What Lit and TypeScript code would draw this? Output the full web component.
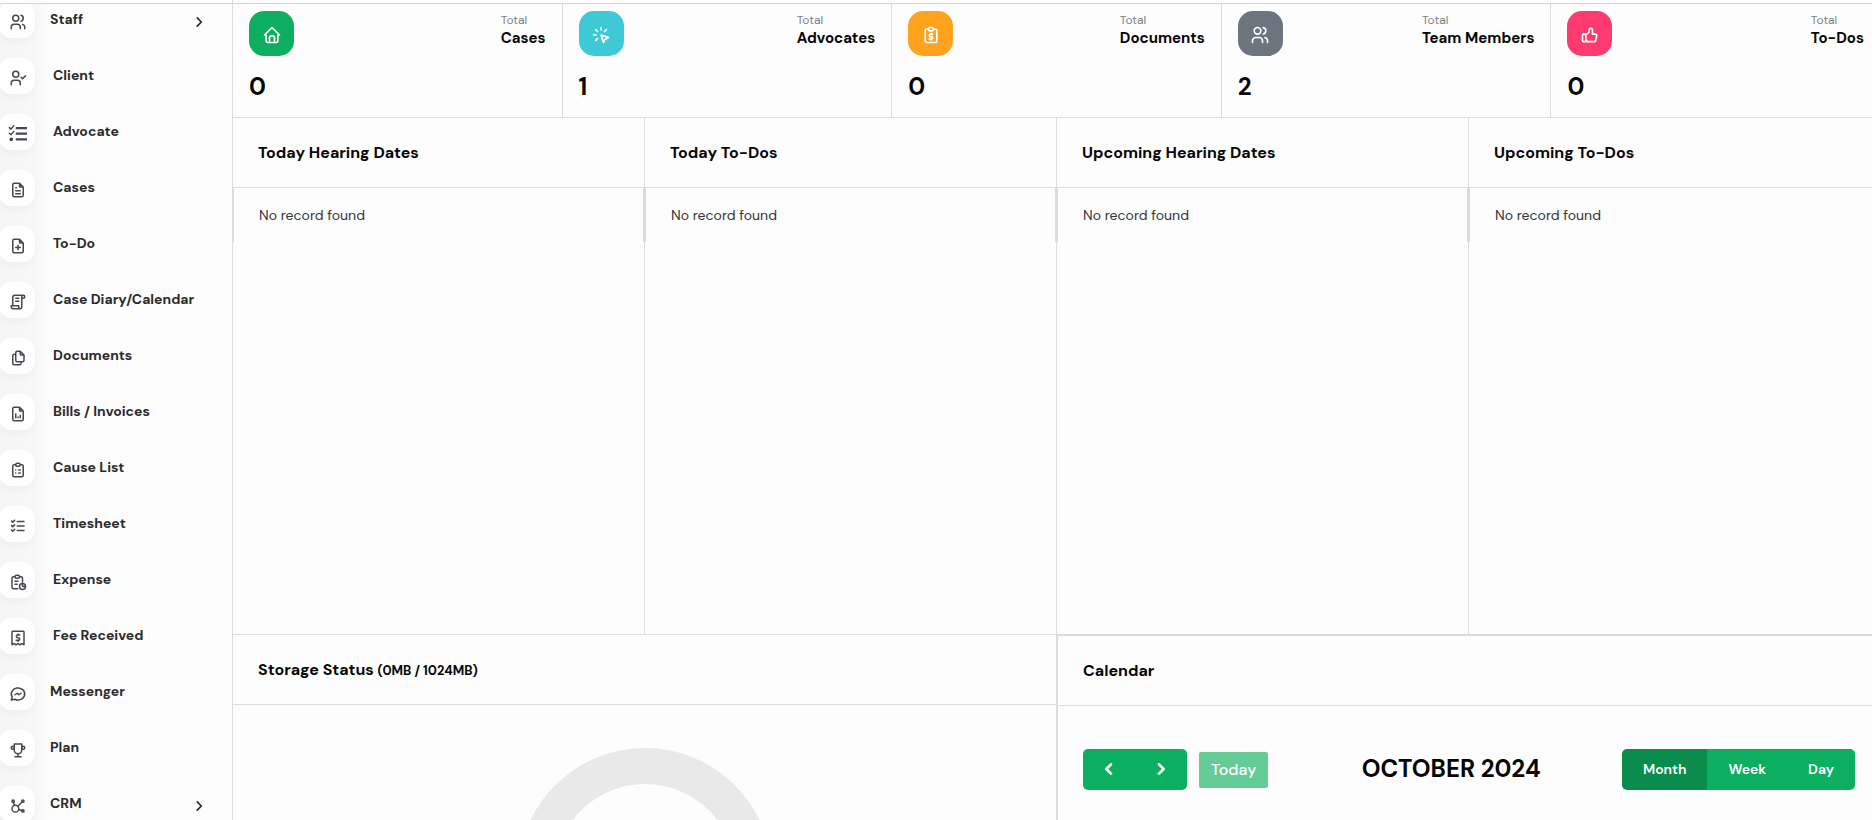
import { LitElement, html, css, svg, type SVGTemplateResult } from "lit";
import { customElement, property, state } from "lit/decorators.js";
import { classMap } from "lit/directives/class-map.js";

const FILE_BODY =
  "M14 3v4a1 1 0 0 0 1 1h4M17 21H7a2 2 0 0 1-2-2V5a2 2 0 0 1 2-2h7l5 5v11a2 2 0 0 1-2 2z";
const CLIPBOARD =
  "M9 5H7a2 2 0 0 0-2 2v12a2 2 0 0 0 2 2h10a2 2 0 0 0 2-2V7a2 2 0 0 0-2-2h-2M11 3h2a2 2 0 0 1 0 4h-2a2 2 0 0 1 0-4z";

const icons: Record<string, SVGTemplateResult> = {
  users: svg`<circle cx="9" cy="7" r="4"/><path d="M3 21v-2a4 4 0 0 1 4-4h4a4 4 0 0 1 4 4v2M16 3.13a4 4 0 0 1 0 7.75M21 21v-2a4 4 0 0 0-3-3.85"/>`,
  userCheck: svg`<circle cx="9" cy="7" r="4"/><path d="M3 21v-2a4 4 0 0 1 4-4h4a4 4 0 0 1 4 4v2M16 11l2 2 4-4"/>`,
  tasks: svg`<path stroke-width="3" stroke-linecap="butt" d="M9 4h15M9 11.5h15M9 19h15"/><path d="M.5 3.5l2 2 4-4.5M.5 11l2 2 4-4.5"/><circle cx="3" cy="19" r="1.5" fill="currentColor"/>`,
  fileText: svg`<path d="${FILE_BODY}M9 9h1M9 13h6M9 17h6"/>`,
  filePlus: svg`<path d="${FILE_BODY}M12 11v6M9 14h6"/>`,
  script: svg`<path d="M15 21H6a3 3 0 0 1-3-3v-1h10v2a2 2 0 0 0 4 0V5a2 2 0 1 1 2 2h-2m2-4H8a3 3 0 0 0-3 3v11M9 7h4M9 11h4"/>`,
  files: svg`<path d="M15 3v4a1 1 0 0 0 1 1h4M18 17h-7a2 2 0 0 1-2-2V5a2 2 0 0 1 2-2h4l5 5v7a2 2 0 0 1-2 2zM16 17v2a2 2 0 0 1-2 2H7a2 2 0 0 1-2-2V9a2 2 0 0 1 2-2h2"/>`,
  fileChart: svg`<path d="${FILE_BODY}M9 17v-5M12 17v-1M15 17v-3"/>`,
  clipboardList: svg`<path d="${CLIPBOARD}M9 12h.01M13 12h2M9 16h.01M13 16h2"/>`,
  clipboardMoney: svg`<path d="${CLIPBOARD}M14 11h-2.5a1.5 1.5 0 0 0 0 3h1a1.5 1.5 0 0 1 0 3H10M12 17v1M12 10v1"/>`,
  listCheck: svg`<path d="M3.5 5.5L5 7l2.5-2.5M3.5 11.5L5 13l2.5-2.5M3.5 17.5L5 19l2.5-2.5M11 6h9M11 12h9M11 18h9"/>`,
  report: svg`<path d="M8 5H6a2 2 0 0 0-2 2v12a2 2 0 0 0 2 2h5.7M18 12V7a2 2 0 0 0-2-2h-2M10 3h2a2 2 0 0 1 0 4h-2a2 2 0 0 1 0-4zM18 14v4h4M8 11h4M8 15h3"/><circle cx="18" cy="18" r="4"/>`,
  receipt: svg`<path d="M4 21V4a1 1 0 0 1 1-1h14a1 1 0 0 1 1 1v17l-2.7-1.5L14.7 21 12 19.5 9.3 21l-2.6-1.5zM14.5 8h-3a1.7 1.7 0 0 0 0 3.5h1a1.7 1.7 0 0 1 0 3.5h-3M12 6.5V8M12 15v1.5"/>`,
  messenger: svg`<path d="M3 20l1.3-3.9a9 8 0 1 1 3.4 2.9L3 20M8 13l3-2 2 2 3-2"/>`,
  trophy: svg`<path d="M8 21h8M12 17v4M7 4h10M17 4v8a5 5 0 0 1-10 0V4"/><circle cx="5" cy="9" r="2"/><circle cx="19" cy="9" r="2"/>`,
  affiliate: svg`<path d="M5.93 6.94l1.28 4.25M12.81 16.79l4.25 1.28M11.68 12.32l5.76-5.76"/><circle cx="5.5" cy="5.5" r="1.5"/><circle cx="18.5" cy="5.5" r="1.5"/><circle cx="18.5" cy="18.5" r="1.5"/><circle cx="8.5" cy="15.5" r="4.5"/>`,
  home: svg`<path d="M5 12H3l9-9 9 9h-2M5 12v7a2 2 0 0 0 2 2h10a2 2 0 0 0 2-2v-7M9 21v-6a2 2 0 0 1 2-2h2a2 2 0 0 1 2 2v6"/>`,
  click: svg`<path d="M3 12h3M12 3v3M7.8 7.8L5.6 5.6M16.2 7.8l2.2-2.2M7.8 16.2l-2.2 2.2M12 12l9 3-4 2-2 4z"/>`,
  thumbUp: svg`<path d="M7 11v8a1 1 0 0 1-1 1H4a1 1 0 0 1-1-1v-7a1 1 0 0 1 1-1h3a4 4 0 0 0 4-4V6a2 2 0 0 1 4 0v5h3a2 2 0 0 1 2 2l-1 5a2 3 0 0 1-2 2h-7a3 3 0 0 1-3-3"/>`,
  chevronRight: svg`<path d="M9 5l7 7-7 7"/>`,
  chevronLeft: svg`<path d="M15 5l-7 7 7 7"/>`,
};

@customElement("ui-icon")
class UiIcon extends LitElement {
  @property() name = "";

  static styles = css`
    :host {
      display: block;
      width: 18px;
      height: 18px;
    }
    .glyph {
      display: block;
      width: 100%;
      height: 100%;
      fill: none;
      stroke: currentColor;
      stroke-width: var(--icon-stroke, 2);
      stroke-linecap: round;
      stroke-linejoin: round;
      overflow: visible;
    }
  `;

  render() {
    return html`<svg class="glyph" viewBox="0 0 24 24" aria-hidden="true">${icons[this.name]}</svg>`;
  }
}

interface NavItem {
  label: string;
  icon: string;
  near?: boolean;
  expandable?: boolean;
}

const NAV: NavItem[] = [
  { label: "Staff", icon: "users", near: true, expandable: true },
  { label: "Client", icon: "userCheck" },
  { label: "Advocate", icon: "tasks" },
  { label: "Cases", icon: "fileText" },
  { label: "To-Do", icon: "filePlus" },
  { label: "Case Diary/Calendar", icon: "script" },
  { label: "Documents", icon: "files" },
  { label: "Bills / Invoices", icon: "fileChart" },
  { label: "Cause List", icon: "clipboardList" },
  { label: "Timesheet", icon: "listCheck" },
  { label: "Expense", icon: "report" },
  { label: "Fee Received", icon: "receipt" },
  { label: "Messenger", icon: "messenger", near: true },
  { label: "Plan", icon: "trophy", near: true },
  { label: "CRM", icon: "affiliate", near: true, expandable: true },
];

@customElement("side-nav")
class SideNav extends LitElement {
  static styles = css`
    :host {
      display: block;
      overflow: hidden;
      background: linear-gradient(to right, #f6f6f6 0, #f8f8f8 34px, #fdfdfd 48px);
    }
    .list {
      list-style: none;
      margin: -12px 0 0;
      padding: 0;
    }
    .link {
      display: flex;
      align-items: center;
      height: 56px;
      padding-right: 26px;
      color: #2b2b2b;
      font-size: 14px;
      font-weight: 700;
      line-height: 20px;
      text-decoration: none;
    }
    .tile {
      box-sizing: border-box;
      flex: none;
      display: grid;
      place-items: center;
      width: 36px;
      height: 36px;
      margin-left: -1px;
      margin-right: 18px;
      padding-top: 3px;
      padding-left: 2px;
      border-radius: 12px;
      background: #fff;
      box-shadow: 0 4px 8px rgba(0, 0, 0, 0.04);
      color: #45494f;
    }
    .near .tile {
      margin-right: 15px;
    }
    .label {
      flex: 1;
      padding-bottom: 2px;
    }
    .chevron {
      width: 14px;
      height: 14px;
      margin-top: 4px;
      --icon-stroke: 3;
    }
  `;

  render() {
    return html`<nav aria-label="Main">
      <ul class="list">
        ${NAV.map(
          (item) => html`<li>
            <a class=${classMap({ link: true, near: !!item.near })} href="#">
              <span class="tile"><ui-icon name=${item.icon}></ui-icon></span>
              <span class="label">${item.label}</span>
              ${item.expandable
                ? html`<ui-icon class="chevron" name="chevronRight"></ui-icon>`
                : null}
            </a>
          </li>`
        )}
      </ul>
    </nav>`;
  }
}

@customElement("stat-card")
class StatCard extends LitElement {
  @property() icon = "";
  @property() label = "";
  @property() value = "";
  @property({ reflect: true }) tone = "green";

  static styles = css`
    :host {
      box-sizing: border-box;
      display: block;
      padding: 7px 16px 15px;
      border-left: 1px solid #dcdcdc;
    }
    .top {
      display: flex;
      justify-content: space-between;
    }
    .badge {
      box-sizing: border-box;
      display: grid;
      place-items: center;
      width: 45px;
      height: 45px;
      padding-top: 3px;
      border-radius: 15px;
      color: #fff;
      background: #0caf60;
    }
    :host([tone="cyan"]) .badge {
      background: #3ec9d6;
    }
    :host([tone="amber"]) .badge {
      background: #ffa21d;
    }
    :host([tone="gray"]) .badge {
      background: #6c757d;
    }
    :host([tone="pink"]) .badge {
      background: #ff3a6e;
    }
    .badge ui-icon {
      width: 20px;
      height: 20px;
    }
    .kind {
      margin: 0;
      font-size: 12px;
      line-height: 18px;
      color: #7a7f86;
    }
    .label {
      margin: 0;
      font-size: 15px;
      font-weight: 700;
      line-height: 18px;
      color: #060606;
    }
    .value {
      margin: 15px 0 0;
      font-size: 24px;
      font-weight: 700;
      line-height: 31px;
      color: #060606;
    }
  `;

  render() {
    return html`
      <div class="top">
        <span class="badge"><ui-icon name=${this.icon}></ui-icon></span>
        <div>
          <p class="kind">Total</p>
          <h3 class="label">${this.label}</h3>
        </div>
      </div>
      <p class="value">${this.value}</p>
    `;
  }
}

@customElement("record-panel")
class RecordPanel extends LitElement {
  @property() heading = "";

  static styles = css`
    :host {
      box-sizing: border-box;
      display: block;
      border-left: 1px solid #dcdcdc;
    }
    .heading {
      margin: 0;
      padding: 23px 25px;
      border-bottom: 1px solid #dcdcdc;
      font-size: 16px;
      font-weight: 700;
      line-height: 23px;
      color: #060606;
    }
    .empty {
      margin: 0;
      padding: 17px 25px;
      border: solid #dcdcdc;
      border-width: 0 1px;
      font-size: 14px;
      line-height: 20px;
      color: #2f3338;
    }
  `;

  render() {
    return html`
      <h2 class="heading">${this.heading}</h2>
      <p class="empty">No record found</p>
    `;
  }
}

@customElement("storage-panel")
class StoragePanel extends LitElement {
  static styles = css`
    :host {
      box-sizing: border-box;
      display: block;
      border-left: 1px solid #dcdcdc;
    }
    .heading {
      margin: 0;
      padding: 23px 25px;
      border-bottom: 1px solid #dcdcdc;
      font-size: 16px;
      font-weight: 700;
      line-height: 23px;
      color: #060606;
    }
    .quota {
      font-size: 13px;
      line-height: 1;
    }
    .gauge {
      display: block;
      width: 254px;
      height: 254px;
      margin: 43px auto;
    }
  `;

  render() {
    return html`
      <h2 class="heading">Storage Status <span class="quota">(0MB / 1024MB)</span></h2>
      <svg class="gauge" viewBox="0 0 254 254" role="img" aria-label="Storage used">
        <circle cx="127" cy="127" r="109" fill="none" stroke="#e9e9e9" stroke-width="36" />
      </svg>
    `;
  }
}

@customElement("calendar-panel")
class CalendarPanel extends LitElement {
  @state() private view = "Month";

  static styles = css`
    :host {
      box-sizing: border-box;
      display: block;
      border: solid #dcdcdc;
      border-width: 1px 0 0 2px;
    }
    .heading {
      margin: 0;
      padding: 23px 25px;
      border-bottom: 1px solid #dcdcdc;
      font-size: 16px;
      font-weight: 700;
      line-height: 23px;
      color: #060606;
    }
    .toolbar {
      display: flex;
      align-items: center;
      justify-content: space-between;
      padding: 43px 25px;
    }
    .start {
      display: flex;
      align-items: center;
      gap: 12px;
      margin-right: 12px;
    }
    .group {
      display: flex;
      border-radius: 5px;
      overflow: hidden;
    }
    button {
      margin: 0;
      border: 0;
      font: inherit;
      color: #fff;
      background: #0caf60;
      cursor: pointer;
    }
    .step,
    .view {
      height: 41px;
      font-size: 14px;
      font-weight: 600;
    }
    .step {
      display: grid;
      place-items: center;
      width: 52px;
      padding: 0 0 2px;
    }
    .step ui-icon {
      width: 16px;
      height: 16px;
      --icon-stroke: 4;
    }
    .view {
      padding: 0 21px 2px;
    }
    .active {
      background: #0a8c4d;
    }
    .today {
      height: 36px;
      padding: 0 12px;
      border-radius: 2px;
      font-size: 16px;
      font-weight: 500;
      background: #65cc98;
    }
    .title {
      margin: 0;
      padding-bottom: 2px;
      font-size: 24px;
      font-weight: 700;
      line-height: 29px;
      color: #060606;
    }
  `;

  render() {
    return html`
      <h2 class="heading">Calendar</h2>
      <div class="toolbar">
        <div class="start">
          <div class="group">
            <button class="step" aria-label="Previous">
              <ui-icon name="chevronLeft"></ui-icon>
            </button>
            <button class="step" aria-label="Next">
              <ui-icon name="chevronRight"></ui-icon>
            </button>
          </div>
          <button class="today">Today</button>
        </div>
        <h2 class="title">OCTOBER 2024</h2>
        <div class="group">
          ${["Month", "Week", "Day"].map(
            (name) => html`<button
              class=${classMap({ view: true, active: this.view === name })}
              @click=${() => (this.view = name)}
            >
              ${name}
            </button>`
          )}
        </div>
      </div>
    `;
  }
}

@customElement("app-root")
class AppRoot extends LitElement {
  static styles = css`
    :host {
      display: grid;
      grid-template-columns: 232px minmax(0, 1fr);
      grid-template-rows: 4px minmax(0, 1fr);
      height: 100vh;
      overflow: hidden;
      background: #fdfdfd;
      font-family: "DM Sans", "Inter", sans-serif;
    }
    .edge {
      border-bottom: 1px solid #d4d4d4;
    }
    .edge-main {
      border-left: 1px solid #dcdcdc;
    }
    .content {
      display: flex;
      flex-direction: column;
      min-height: 0;
      margin-right: -8px;
    }
    .stats {
      display: grid;
      grid-template-columns: repeat(5, minmax(0, 1fr));
      border-bottom: 1px solid #dcdcdc;
    }
    .records {
      display: grid;
      grid-template-columns: repeat(4, minmax(0, 1fr));
      min-height: 516px;
      border-bottom: 1px solid #dcdcdc;
    }
    .lower {
      display: grid;
      grid-template-columns: repeat(2, minmax(0, 1fr));
      flex: 1;
    }
  `;

  render() {
    return html`
      <div class="edge"></div>
      <div class="edge edge-main"></div>
      <side-nav></side-nav>
      <main class="content">
        <section class="stats">
          <stat-card icon="home" tone="green" label="Cases" value="0"></stat-card>
          <stat-card icon="click" tone="cyan" label="Advocates" value="1"></stat-card>
          <stat-card icon="clipboardMoney" tone="amber" label="Documents" value="0"></stat-card>
          <stat-card icon="users" tone="gray" label="Team Members" value="2"></stat-card>
          <stat-card icon="thumbUp" tone="pink" label="To-Dos" value="0"></stat-card>
        </section>
        <section class="records">
          <record-panel heading="Today Hearing Dates"></record-panel>
          <record-panel heading="Today To-Dos"></record-panel>
          <record-panel heading="Upcoming Hearing Dates"></record-panel>
          <record-panel heading="Upcoming To-Dos"></record-panel>
        </section>
        <section class="lower">
          <storage-panel></storage-panel>
          <calendar-panel></calendar-panel>
        </section>
      </main>
    `;
  }
}
